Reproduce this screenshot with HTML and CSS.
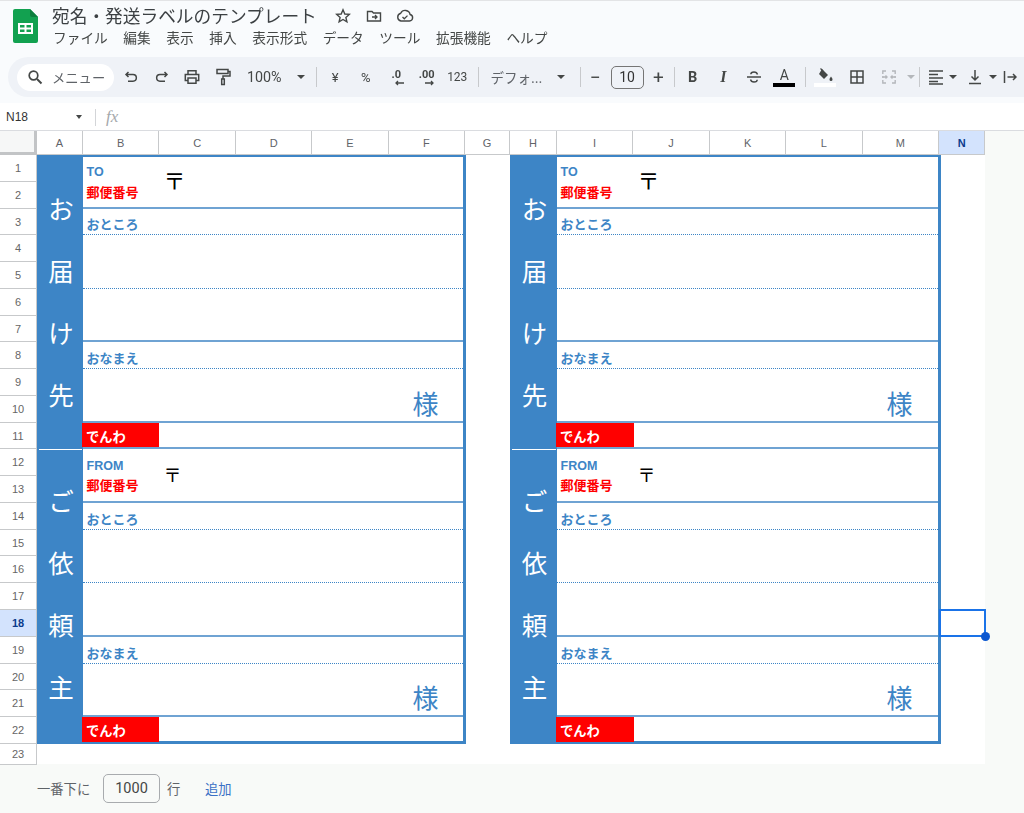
FILE: index.html
```html
<!DOCTYPE html>
<html lang="ja">
<head>
<meta charset="utf-8">
<title>宛名・発送ラベルのテンプレート</title>
<link rel="stylesheet" href="styles.css">
</head>
<body>
<header class="top">
  <svg class="logo" viewBox="0 0 25 34" width="25" height="34"><path d="M2 0h15l8 8v24a2 2 0 0 1-2 2H2a2 2 0 0 1-2-2V2a2 2 0 0 1 2-2z" fill="#12a150"/><path d="M17 0l8 8h-6a2 2 0 0 1-2-2z" fill="#0c7f3e"/><path d="M5 14h15v11H5z" fill="#fff"/><path d="M7 16h4.500v2.500H7zM13.500 16H18v2.500h-4.500zM7 20.500h4.500V23H7zM13.500 20.500H18V23h-4.500z" fill="#12a150"/></svg>
  <div class="heads">
    <div class="titlerow">
      <span class="title">宛名・発送ラベルのテンプレート</span>
      <svg class="ti ti-star" viewBox="0 0 16 16" width="16" height="16"><path d="M8 1.800l1.800 4.200 4.500.4-3.400 3 1 4.400L8 11.500l-3.900 2.300 1-4.400-3.400-3 4.500-.4z" fill="none" stroke="#444746" stroke-width="1.400"/></svg>
      <svg class="ti ti-folder" viewBox="0 0 16 16" width="16" height="16"><path d="M1.500 3.500h4.500l1.500 1.500h7v8h-13z" fill="none" stroke="#444746" stroke-width="1.400"/><path d="M6 9h5M9 7l2 2-2 2" fill="none" stroke="#444746" stroke-width="1.300"/></svg>
      <svg class="ti ti-cloud" viewBox="0 0 18 16" width="18" height="16"><path d="M5 13h8.500a3.300 3.300 0 0 0 .6-6.500A5 5 0 0 0 4.700 5.200 4 4 0 0 0 5 13z" fill="none" stroke="#444746" stroke-width="1.400"/><path d="M6.500 9l1.800 1.800 3.200-3.200" fill="none" stroke="#444746" stroke-width="1.300"/></svg>
    </div>
    <nav class="menu">
      <span>ファイル</span><span>編集</span><span>表示</span><span>挿入</span><span>表示形式</span><span>データ</span><span>ツール</span><span>拡張機能</span><span>ヘルプ</span>
    </nav>
  </div>
</header>

<div class="toolbar">
  <div class="search">
    <svg viewBox="0 0 16 16" width="16" height="16"><circle cx="6.500" cy="6.500" r="4.300" fill="none" stroke="#444746" stroke-width="1.700"/><path d="M10 10l4.500 4.500" stroke="#444746" stroke-width="1.900"/></svg>
    <span>メニュー</span>
  </div>
  <button class="tb tb-first"><svg viewBox="0 0 16 16" width="16" height="16"><path d="M3 5.500h7a3.300 3.300 0 0 1 0 6.700H5M5.500 3L3 5.500 5.500 8" fill="none" stroke="#444746" stroke-width="1.500"/></svg></button>
  <button class="tb"><svg viewBox="0 0 16 16" width="16" height="16"><path d="M13 5.500H6a3.300 3.300 0 0 0 0 6.700h5M10.500 3L13 5.500 10.500 8" fill="none" stroke="#444746" stroke-width="1.500"/></svg></button>
  <button class="tb"><svg viewBox="0 0 16 16" width="16" height="16"><path d="M4 5V1.800h8V5M4 11.500H1.300V5.500h13.400v6H12M4 9h8v5.300H4z" fill="none" stroke="#444746" stroke-width="1.500"/></svg></button>
  <button class="tb"><svg viewBox="0 0 16 18" width="16" height="18"><path d="M2 1.500h11v4H2zM13 3.500h2v4.500H8v3M6.700 11h2.600v5.500H6.700z" fill="none" stroke="#444746" stroke-width="1.500"/></svg></button>
  <div class="zoomsel"><span>100%</span><i class="caret"></i></div>
  <i class="sep"></i>
  <button class="tb txt">¥</button>
  <button class="tb txt">%</button>
  <button class="tb dec"><span>.0</span><svg viewBox="0 0 12 6" width="12" height="6"><path d="M11 3H3M5 1L3 3l2 2" fill="none" stroke="#444746" stroke-width="1.300"/></svg></button>
  <button class="tb dec"><span>.00</span><svg viewBox="0 0 12 6" width="12" height="6"><path d="M2 3h8M8 1l2 2-2 2" fill="none" stroke="#444746" stroke-width="1.300"/></svg></button>
  <button class="tb num">123</button>
  <i class="sep sep-a"></i>
  <div class="fontsel"><span>デフォ...</span><i class="caret"></i></div>
  <i class="sep sep-b"></i>
  <button class="tb pm">−</button>
  <div class="size">10</div>
  <button class="tb pm">+</button>
  <i class="sep sep-c"></i>
  <button class="tb bold">B</button>
  <button class="tb ital">I</button>
  <button class="tb"><svg viewBox="0 0 16 16" width="16" height="16"><path d="M1 8h14" stroke="#444746" stroke-width="1.400"/><path d="M11.500 5.500C11 3.500 9.500 3 8 3S4.800 3.700 4.800 5.300M4.500 10.500C5 12.500 6.500 13 8 13s3.200-.7 3.200-2.300" fill="none" stroke="#444746" stroke-width="1.400"/></svg></button>
  <button class="tb color"><span>A</span><i></i></button>
  <i class="sep sep-d"></i>
  <button class="tb fill"><svg viewBox="0 0 18 14" width="18" height="14"><path d="M6 1l6 6-4 4-5-5z" fill="#444746"/><path d="M4.500 .500L7 3" stroke="#444746" stroke-width="1.300"/><path d="M15 8.500c1 1.500 1.500 2 1.500 3a1.500 1.500 0 0 1-3 0c0-1 .5-1.500 1.500-3z" fill="#444746"/></svg><i></i></button>
  <button class="tb tb-borders"><svg viewBox="0 0 16 16" width="16" height="16"><path d="M2 2h12v12H2zM8 2v12M2 8h12" fill="none" stroke="#444746" stroke-width="1.500"/></svg></button>
  <button class="tb tb-merge"><svg viewBox="0 0 16 16" width="16" height="16"><path d="M5 2H1.800v3M5 14H1.800v-3M11 2h3.200v3M11 14h3.200v-3M1.800 7v2M14.200 7v2M2 8h3.500M14 8h-3.500M4.500 6.500L6 8 4.500 9.500M11.500 6.500L10 8l1.500 1.500" fill="none" stroke="#b4b7bb" stroke-width="1.400"/></svg><i class="caret caret-off"></i></button>
  <i class="sep sep-e"></i>
  <button class="tb tb-align"><svg viewBox="0 0 16 16" width="16" height="16"><path d="M1 2h14M1 5.500h9M1 9h14M1 12.500h9M1 15h14" stroke="#444746" stroke-width="1.300"/></svg><i class="caret"></i></button>
  <button class="tb tb-valign"><svg viewBox="0 0 16 16" width="16" height="16"><path d="M8 1v9.500M4.500 7.500L8 11l3.500-3.500M2 14.500h12" fill="none" stroke="#444746" stroke-width="1.500"/></svg><i class="caret"></i></button>
  <button class="tb tb-end"><svg viewBox="0 0 14 16" width="14" height="16"><path d="M1.500 2v12M4.500 8h8.500M10 5l3 3-3 3" fill="none" stroke="#444746" stroke-width="1.500"/></svg></button>
</div>

<div class="formula">
  <span class="namebox">N18</span><i class="caret caret-name"></i>
  <i class="fsep"></i>
  <span class="fx">fx</span>
</div>

<main class="sheet-wrap">
  <div class="sheet">
    <div class="colhead">
      <div class="corner"></div>
      <div class="ch w46">A</div><div class="ch w76">B</div><div class="ch w77">C</div><div class="ch w76">D</div><div class="ch w76">E</div><div class="ch w77">F</div>
      <div class="ch w45">G</div><div class="ch w47">H</div><div class="ch w76">I</div><div class="ch w77">J</div><div class="ch w76">K</div><div class="ch w76">L</div><div class="ch w77">M</div><div class="ch w46 on">N</div>
    </div>
    <div class="body">
      <div class="rowhead">
        <div class="rh">1</div><div class="rh">2</div><div class="rh">3</div><div class="rh">4</div><div class="rh">5</div><div class="rh">6</div><div class="rh">7</div><div class="rh">8</div><div class="rh">9</div><div class="rh">10</div><div class="rh">11</div><div class="rh">12</div><div class="rh">13</div><div class="rh">14</div><div class="rh">15</div><div class="rh">16</div><div class="rh">17</div><div class="rh on">18</div><div class="rh">19</div><div class="rh">20</div><div class="rh">21</div><div class="rh">22</div><div class="rh">23</div>
      </div>
      <div class="labels">
        <section class="label">
          <div class="block">
            <div class="side"><span>お</span><span>届</span><span>け</span><span>先</span></div>
            <div class="form">
              <div class="f2 solid post"><div class="tags"><b class="blue">TO</b><b class="red">郵便番号</b></div><span class="zip">〒</span></div>
              <div class="f1 dotted"><b class="blue">おところ</b></div>
              <div class="f2 dotted"></div>
              <div class="f2 solid"></div>
              <div class="f1 dotted"><b class="blue">おなまえ</b></div>
              <div class="f2 solid name"><span class="sama">様</span></div>
              <div class="f1 tel"><b>でんわ</b></div>
            </div>
          </div>
          <div class="block second">
            <div class="side"><span>ご</span><span>依</span><span>頼</span><span>主</span></div>
            <div class="form">
              <div class="f2 solid post"><div class="tags"><b class="blue">FROM</b><b class="red">郵便番号</b></div><span class="zip small">〒</span></div>
              <div class="f1 dotted"><b class="blue">おところ</b></div>
              <div class="f2 dotted"></div>
              <div class="f2 solid"></div>
              <div class="f1 dotted"><b class="blue">おなまえ</b></div>
              <div class="f2 solid name"><span class="sama">様</span></div>
              <div class="f1 tel"><b>でんわ</b></div>
            </div>
          </div>
        </section>
        <section class="label">
          <div class="block">
            <div class="side"><span>お</span><span>届</span><span>け</span><span>先</span></div>
            <div class="form">
              <div class="f2 solid post"><div class="tags"><b class="blue">TO</b><b class="red">郵便番号</b></div><span class="zip">〒</span></div>
              <div class="f1 dotted"><b class="blue">おところ</b></div>
              <div class="f2 dotted"></div>
              <div class="f2 solid"></div>
              <div class="f1 dotted"><b class="blue">おなまえ</b></div>
              <div class="f2 solid name"><span class="sama">様</span></div>
              <div class="f1 tel"><b>でんわ</b></div>
            </div>
          </div>
          <div class="block second">
            <div class="side"><span>ご</span><span>依</span><span>頼</span><span>主</span></div>
            <div class="form">
              <div class="f2 solid post"><div class="tags"><b class="blue">FROM</b><b class="red">郵便番号</b></div><span class="zip small">〒</span></div>
              <div class="f1 dotted"><b class="blue">おところ</b></div>
              <div class="f2 dotted"></div>
              <div class="f2 solid"></div>
              <div class="f1 dotted"><b class="blue">おなまえ</b></div>
              <div class="f2 solid name"><span class="sama">様</span></div>
              <div class="f1 tel"><b>でんわ</b></div>
            </div>
          </div>
        </section>
        <div class="selection"><i></i></div>
      </div>
    </div>
  </div>
  <footer class="addrows">
    <span class="a1">一番下に</span><span class="count">1000</span><span class="a2">行</span><span class="a3">追加</span>
  </footer>
</main>
</body>
</html>
```
FILE: styles.css
```css
:root { --row: 26.77px; --blue: #3d85c6; --jp: "Noto Sans CJK JP", "Noto Sans", sans-serif; }
* { box-sizing: border-box; }
html, body { margin: 0; height: 813px; overflow: hidden; }
body { background: #f9fbfd; font-family: "Liberation Sans", var(--jp); color: #444746; display: flex; flex-direction: column; filter: blur(.4px); }
b { font-weight: 700; }
button { border: 0; background: none; padding: 0; margin: 0; font: inherit; color: inherit; display: flex; align-items: center; justify-content: center; }

/* top */
.top { height: 57px; flex: none; background: #f9fbfd; border-top: 1px solid #e3e4e6; display: flex; padding: 8px 0 0 13px; }
.logo { flex: none; }
.heads { margin-left: 14px; margin-top: -7px; }
.titlerow { display: flex; align-items: center; height: 26px; }
.title { font: 400 17.7px/26px var(--jp); color: #3c4043; }
.ti { flex: none; position: relative; top: 1px; }
.ti-star { margin-left: 18px; }
.ti-folder { margin-left: 15px; }
.ti-cloud { margin-left: 14px; }
.menu { display: flex; gap: 15.6px; margin-top: -3px; padding-left: 1px; font: 400 13.7px/24px var(--jp); color: #444746; }

/* toolbar */
.toolbar { flex: none; height: 40px; margin-left: 8px; background: #eff2f7; display: flex; align-items: center; border-radius: 20px 0 0 20px; overflow: hidden; }
.search { width: 97px; height: 27px; margin-left: 9px; background: #fff; border-radius: 14px; display: flex; align-items: center; padding-left: 10px; gap: 9px; font: 400 13.3px/27px var(--jp); color: #5f6368; flex: none; }
.search span { white-space: nowrap; }
.tb { flex: none; width: 30.5px; height: 28px; }
.tb-first { margin-left: 2px; }
.zoomsel { width: 72px; padding-left: 9px; display: flex; align-items: center; font: 400 14.3px "Roboto", sans-serif; flex: none; }
.zoomsel .caret { margin-left: 15px; }
.caret { display: inline-block; width: 0; height: 0; border: 4px solid transparent; border-top: 4.5px solid #444746; border-bottom: 0; flex: none; }
.sep { flex: none; width: 1px; height: 20px; background: #c7c9cc; margin: 0 3px 0 6px; }
.txt { font: 400 13px "Roboto", sans-serif; }
.num { font: 400 12px "Roboto", sans-serif; }
.dec { flex-direction: column; font: 700 11px/10px "Roboto", sans-serif; padding-top: 2px; }
.dec svg { margin-left: 5px; }
.sep-a { margin: 0 12px 0 5px; }
.fontsel { width: 87px; display: flex; align-items: center; font: 400 13.5px var(--jp); flex: none; color: #5f6368; }
.fontsel span { width: 66px; white-space: nowrap; }
.sep-b { margin: 0 0 0 2px; }
.pm { font: 400 19px "Roboto", sans-serif; width: 30px; }
.size { width: 33px; height: 23px; flex: none; border: 1px solid #757575; border-radius: 5px; text-align: center; font: 400 14px/21px "Roboto", sans-serif; color: #333; }
.sep-c { margin: 0 3px 0 0; }
.bold { font: 700 14.5px "Roboto", sans-serif; }
.ital { font: italic 700 16px "Liberation Serif", serif; }
.color { flex-direction: column; font: 400 14px/14px "Roboto", sans-serif; }
.color i { display: block; width: 22px; height: 4px; background: #000; margin-top: 1px; }
.sep-d { margin: 0 4px 0 5px; }
.fill { flex-direction: column; width: 30px; }
.fill i { display: block; width: 22px; height: 4px; background: #fff; margin-top: 1px; }
.tb-borders { margin-left: 2px; }
.tb-merge { margin-left: 2px; width: 44px; justify-content: flex-start; padding-left: 7px; gap: 10px; }
.caret-off { border-top-color: #b4b7bb; }
.sep-e { margin: 0 3px 0 1px; }
.tb-align { width: 40px; gap: 5px; justify-content: flex-start; padding-left: 5px; }
.tb-valign { width: 36px; gap: 6px; justify-content: flex-start; padding-left: 4px; }
.tb-end { width: 22px; }

/* formula bar */
.formula { flex: none; height: 34px; background: #fff; display: flex; align-items: center; padding: 7px 0 0 6px; border-bottom: 1px solid #dadce0; box-shadow: inset 0 6px 0 #f9fbfd; }
.namebox { font: 400 12px "Liberation Sans", sans-serif; color: #333; width: 70px; }
.caret-name { border-width: 3.5px; border-top-width: 4px; border-bottom: 0; }
.fsep { width: 1px; height: 17px; background: #d3d5d8; margin-left: 13px; }
.fx { font: italic 400 17px "Liberation Serif", serif; color: #a5a8ab; margin-left: 10px; }

/* sheet */
.sheet-wrap { flex: 1; display: flex; flex-direction: column; background: #f8faf8; }
.sheet { width: 985px; height: 633px; background: #fff; flex: none; }
.colhead { display: flex; height: 24px; }
.corner { width: 37px; flex: none; background: #f6f7f7; border-right: 3px solid #c2c4c6; border-bottom: 3px solid #c2c4c6; }
.ch { flex: none; height: 24px; text-align: center; font: 400 11px/24px "Liberation Sans", sans-serif; color: #5f6368; border-right: 1px solid #c7c9cb; border-bottom: 1px solid #c7c9cb; background: #fff; }
.ch.on { background: #d3e3fd; color: #0b3b8c; font-weight: 700; }
.w45 { width: 44.7px; } .w46 { width: 46px; } .w47 { width: 47px; } .w76 { width: 76.3px; } .w77 { width: 76.7px; }
.body { display: flex; }
.rowhead { width: 37px; flex: none; }
.rh { height: var(--row); text-align: center; font: 400 11px/26px "Liberation Sans", sans-serif; color: #666; border-right: 1px solid #c7c9cb; border-bottom: 1px solid #c7c9cb; }
.rh:last-child { height: 21px; line-height: 20px; }
.rh.on { background: #d3e3fd; color: #0b3b8c; font-weight: 700; }
.labels { display: flex; gap: 44px; position: relative; flex: 1; align-items: flex-start; }
.label { width: 429px; flex: none; border-right: 3px solid var(--blue); border-bottom: 3px solid var(--blue); border-top: 2px solid var(--blue); }
.label + .label { width: 431px; }
.label + .label .side { width: 47px; }
.label + .label .tel b { width: 78px; }
.label + .label .zip { margin-left: 1px; }
.label + .label .sama { margin-right: 25.5px; }
.block { display: flex; height: calc(var(--row) * 11 - 2px); }
.block.second { height: calc(var(--row) * 11 - 3px); }
.side { width: 46px; flex: none; background: var(--blue); color: #fff; font: 400 25.5px/1 var(--jp); display: flex; flex-direction: column; align-items: center; padding: 37.5px 0 0 2px; gap: 36.5px; position: relative; }
.second .side { padding-top: 38px; }
.second .side::before { content: ""; position: absolute; top: 0; left: 2px; right: 1px; height: 1px; background: #fff; }
.form { flex: 1; min-width: 0; display: flex; flex-direction: column; }
.f1, .f2 { flex: none; position: relative; display: flex; }
.f1 { height: var(--row); align-items: flex-end; padding: 0 0 1px 3.5px; }
.f2 { height: calc(var(--row) * 2); }
.block:first-child .post { height: calc(var(--row) * 2 - 2px); }
.f1 b { font: 700 13px/18px var(--jp); }
.solid { border-bottom: 2px solid #6fa3d3; }
.dotted { border-bottom: 1px dotted var(--blue); }
.blue { color: var(--blue); }
.red { color: #f00; }
.post { padding-left: 3.5px; }
.tags { display: flex; flex-direction: column; width: 76px; padding-top: 6px; }
.tags .blue { font: 700 12.5px/18px "Liberation Sans", var(--jp); }
.tags .red { font: 700 13px/22px var(--jp); }
.second .tags { padding-top: 8px; }
.second .tags .red { margin-top: -1px; }
.zip { font: 400 22px/24px var(--jp); color: #000; margin: 10px 0 0 1px; }
.zip.small { font-size: 18px; margin: 13px 0 0 1px; }
.name { justify-content: flex-end; }
.sama { font: 400 26px/1 var(--jp); color: var(--blue); margin: 20.5px 24.5px 0 0; }
.tel { border-bottom: 0; padding: 0; }
.second .tel { height: 25px; }
.tel b { width: 77px; height: 100%; margin-left: -1px; background: #f00; color: #fff; font: 700 13.3px/27px var(--jp); padding-left: 4px; }
.block:first-child .tel { border-bottom: 2px solid #6fa3d3; }
.selection { position: absolute; left: 902px; top: 454px; width: 46.5px; height: 28px; border: 2px solid #1a73e8; pointer-events: none; }
.selection i { position: absolute; right: -6px; bottom: -6px; width: 9px; height: 9px; border-radius: 50%; background: #0b57d0; }

/* footer */
.addrows { flex: 1; display: flex; align-items: center; padding: 0 0 0 37px; font: 400 13.3px var(--jp); color: #5f6368; }
.a1 { width: 66px; }
.count { width: 57px; height: 29px; border: 1px solid #a8abae; border-radius: 5px; text-align: center; font: 400 14.5px/28px "Roboto", sans-serif; color: #444746; }
.a2 { margin-left: 7px; width: 38px; }
.a3 { color: #3b70c5; }
```
